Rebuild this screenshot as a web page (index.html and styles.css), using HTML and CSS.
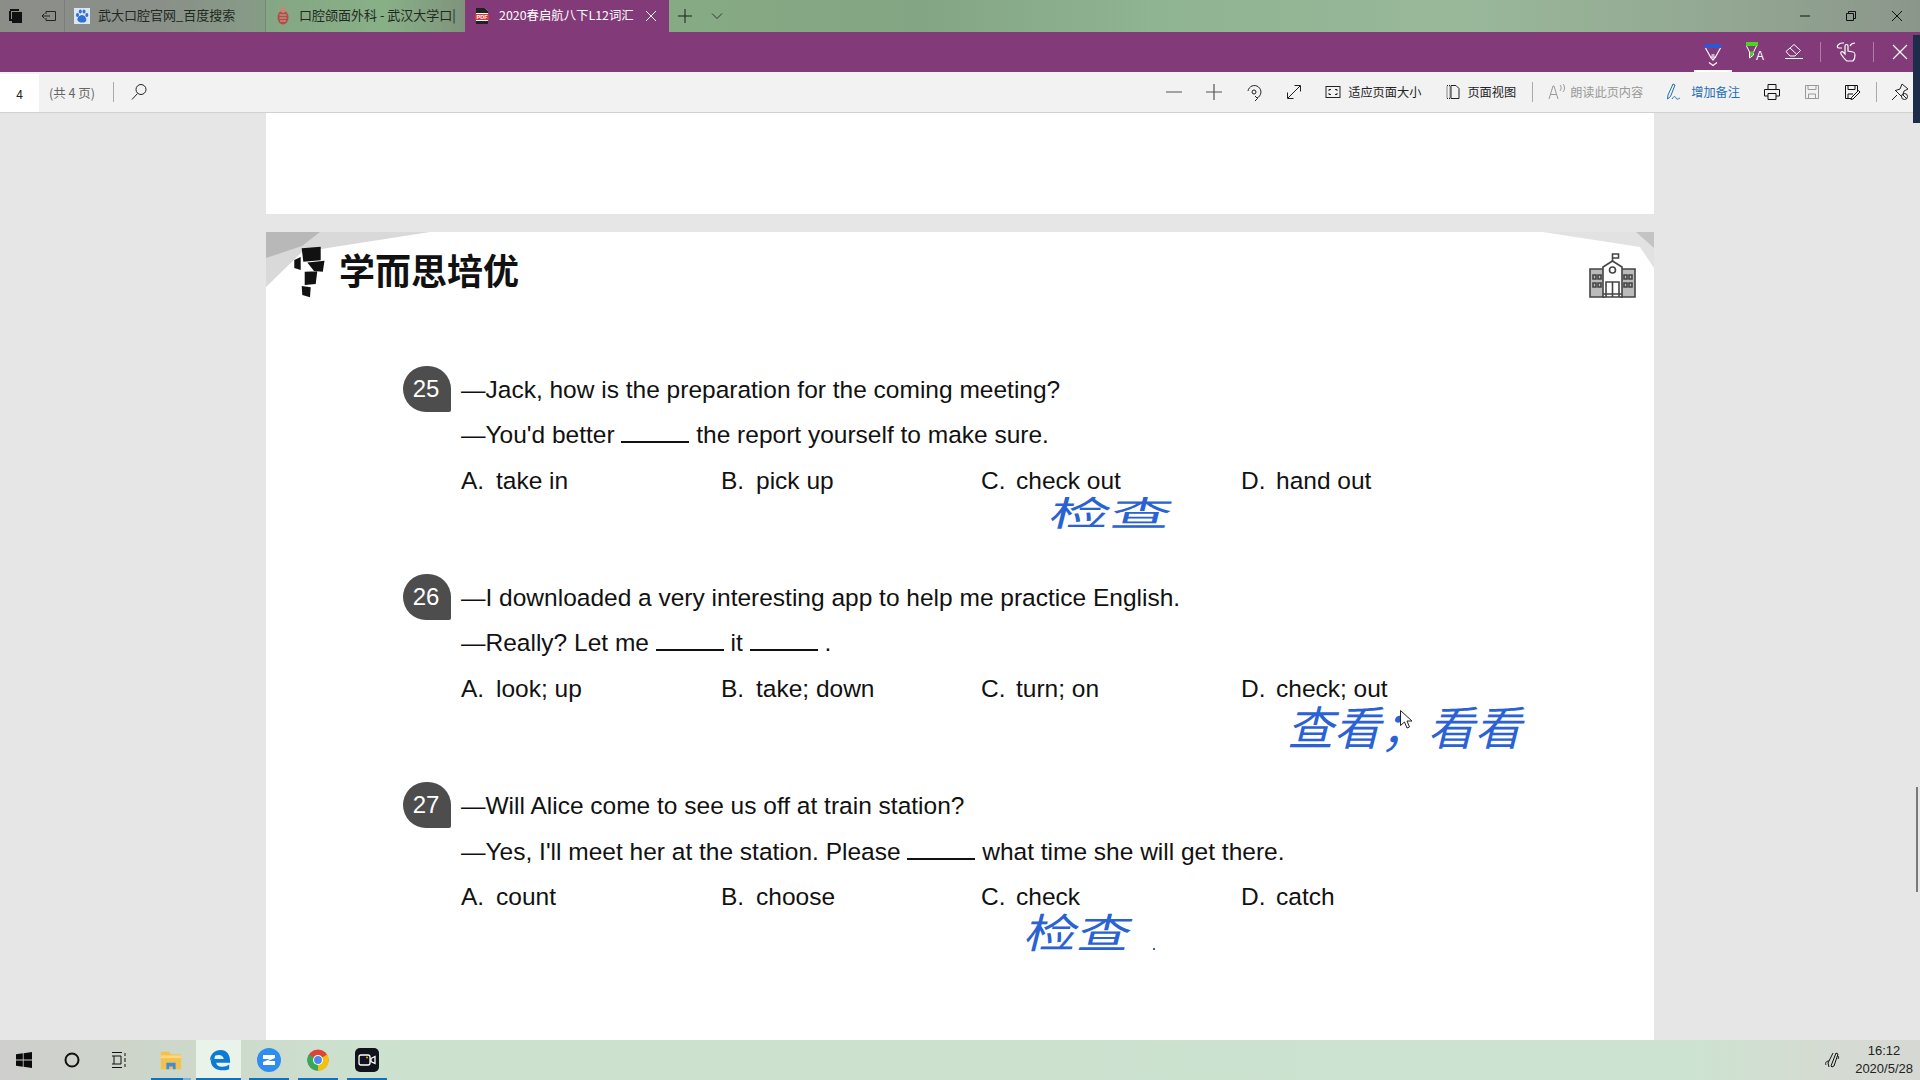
FILE: index.html
```html
<!DOCTYPE html>
<html lang="zh-CN">
<head>
<meta charset="utf-8">
<title>2020春启航八下L12词汇</title>
<link rel="stylesheet" href="styles.css">
</head>
<body>
<div class="app">
  <header class="tabbar">
    <div class="tab-tools">
      <svg class="ic16" viewBox="0 0 16 16"><path d="M2 1h9v2H2zM4 4h10v11H4z" fill="#111"/><path d="M2 3v9h2" fill="none" stroke="#111" stroke-width="2"/></svg>
      <svg class="ic16" viewBox="0 0 16 16" fill="none" stroke="#222"><path d="M5 3.500h9.500v9H5V10M5 6V3.500M1 8h8M3.500 5.500 1 8l2.500 2.500"/></svg>
    </div>
    <div class="tab">
      <svg class="ic16" viewBox="0 0 16 16"><rect width="16" height="16" fill="#dbe6f6"/><g fill="#2f6fd6"><ellipse cx="3.500" cy="7" rx="1.500" ry="2"/><ellipse cx="6.300" cy="3.500" rx="1.500" ry="2"/><ellipse cx="10" cy="3.500" rx="1.500" ry="2"/><ellipse cx="12.800" cy="7" rx="1.500" ry="2"/><path d="M8 7c3 0 5 4 4 6s-6 2-8 0 1-6 4-6z"/></g></svg>
      <span class="tab-title">武大口腔官网_百度搜索</span>
    </div>
    <div class="tab tab-second">
      <svg class="ic16" viewBox="0 0 16 18"><ellipse cx="8" cy="10.500" rx="5.500" ry="7" fill="#ad5048"/><circle cx="8" cy="3" r="2.800" fill="#c9837a"/><path d="M4.500 8h7M4.500 11h7M5 14h6" stroke="#d9a29a"/></svg>
      <span class="tab-title">口腔颌面外科 - 武汉大学口|</span>
    </div>
    <div class="tab tab-active">
      <svg class="ic16" viewBox="0 0 16 16"><path d="M2 0h9l3 3v13H2z" fill="#fff"/><path d="M2 0h9l3 3v2H2zM2 13h12v3H2z" fill="#222"/><rect x="1" y="6" width="14" height="6" fill="#d13b3b"/><text class="pdf-mark" x="8" y="11">PDF</text></svg>
      <span class="tab-title tab-title-active">2020春启航八下L12词汇</span>
      <svg class="ic12" viewBox="0 0 12 12" stroke="#fff" fill="none"><path d="M1 1l10 10M11 1 1 11"/></svg>
    </div>
    <svg class="ic16 tab-plus" viewBox="0 0 16 16" stroke="#1c1c1c" fill="none"><path d="M8 1v14M1 8h14"/></svg>
    <svg class="ic12 tab-chevron" viewBox="0 0 12 12" stroke="#333" fill="none"><path d="M1 3.500l5 5 5-5"/></svg>
    <div class="win-controls">
      <svg class="ic12" viewBox="0 0 12 12" stroke="#111" fill="none"><path d="M1 6h10"/></svg>
      <svg class="ic12" viewBox="0 0 12 12" stroke="#111" fill="none"><path d="M1.500 3.500h7v7h-7zM3.500 3.500v-2h7v7h-2"/></svg>
      <svg class="ic12" viewBox="0 0 12 12" stroke="#111" fill="none"><path d="M1 1l10 10M11 1 1 11"/></svg>
    </div>
  </header>

  <div class="inkbar">
    <div class="ink-tool ink-tool-active">
      <svg class="ic24" viewBox="0 0 24 30"><rect x="4" y="2" width="16" height="4" fill="#2b57d8"/><path d="M4.500 6l5 9h5l5-9M9.500 15l2.500 3 2.500-3" fill="none" stroke="#fff" stroke-width="1.200"/><path d="M12 12v5" stroke="#c9b5d6" stroke-width="3"/><path d="M8 20.500l4 3 4-3" fill="none" stroke="#fff" stroke-width="1.200"/></svg>
    </div>
    <div class="ink-tool">
      <svg class="ic24" viewBox="0 0 24 24"><rect x="4" y="2" width="12" height="4" fill="#49d41d"/><path d="M4.500 6l3 6v6l4-3V12l3-6" fill="none" stroke="#fff"/><path d="M8 11.500h4.500l-1.500 3-3 2.500z" fill="#49d41d"/><text class="ink-a" x="14" y="20">A</text></svg>
    </div>
    <div class="ink-tool">
      <svg class="ic24" viewBox="0 0 24 24" fill="none" stroke="#fff"><path d="M4 11.500 12 4.500l6.500 6-5.500 5.500H8zM8 8l6.500 6M3 18.500h18"/></svg>
    </div>
    <span class="ink-sep"></span>
    <div class="ink-tool">
      <svg class="ic24" viewBox="0 0 24 24" fill="none" stroke="#fff" stroke-width="1.200"><path d="M12 21c-2-1-4-4-6-7-1-2 1-3 2-2l2 2V6c0-2 3-2 3 0v5l5 1c2 .5 2 1 2 3 0 3-1 5-2 6zM7 8H4c-2 0-2-2-1-3s2-2 4-2h2M15 6c1-2 2-3 5-3"/></svg>
    </div>
    <span class="ink-sep"></span>
    <div class="ink-tool">
      <svg class="ic16b" viewBox="0 0 18 18" fill="none" stroke="#fff" stroke-width="1.200"><path d="M2 2l14 14M16 2 2 16"/></svg>
    </div>
  </div>

  <nav class="toolbar">
    <span class="page-input">4</span>
    <span class="page-count">(共 4 页)</span>
    <span class="tb-sep"></span>
    <svg class="ic18 tb-search" viewBox="0 0 18 18" fill="none" stroke="#222"><circle cx="11" cy="6.500" r="5"/><path d="M7.500 10.500 2 16.500"/></svg>
    <div class="tb-right">
      <svg class="ic18" viewBox="0 0 18 18" stroke="#777" fill="none" stroke-width="1.300"><path d="M1 9h16"/></svg>
      <svg class="ic18" viewBox="0 0 18 18" stroke="#555" fill="none" stroke-width="1.200"><path d="M1 9h16M9 1v16"/></svg>
      <svg class="ic18" viewBox="0 0 18 18" stroke="#222" fill="none"><path d="M3 8a6.500 6.500 0 1 1 9 7M10 13l2.500 2.500L10 18"/><circle cx="9" cy="9" r="2"/></svg>
      <svg class="ic18" viewBox="0 0 18 18" stroke="#222" fill="none"><path d="M3 15 15 3M9.500 2.500h6v6M2.500 9.500v6h6"/></svg>
      <div class="tb-item tb-item-fit">
        <svg class="ic16" viewBox="0 0 16 16" stroke="#222" fill="none"><rect x="1" y="2.500" width="14" height="11"/><path d="M4 7V5.500h2M12 7V5.500h-2M4 9v1.500h2M12 9v1.500h-2"/></svg>
        <span>适应页面大小</span>
      </div>
      <div class="tb-item tb-item-view">
        <svg class="ic16" viewBox="0 0 16 16" stroke="#222" fill="none"><path d="M2 1.500h3v13H2z" stroke-dasharray="1 1"/><path d="M6 1.500h5l3 3v10H6z"/></svg>
        <span>页面视图</span>
      </div>
      <span class="tb-sep tb-sep-view"></span>
      <div class="tb-item tb-item-read">
        <svg class="ic18" viewBox="0 0 18 18" stroke="#999" fill="none"><path d="M1 16 5 3h1l4 13M2.500 11.500h6M12 2c1.500 1.500 1.500 4 0 6M15 1c2 2 2 6 0 8"/></svg>
        <span>朗读此页内容</span>
      </div>
      <div class="tb-item tb-item-note">
        <svg class="ic18" viewBox="0 0 18 18" stroke="#1f6fb5" fill="none"><path d="M7 1 2 12l-.5 4 3-2.500L9 2zM6 16c2-3 3-3 4-1s2 1 4 0"/></svg>
        <span>增加备注</span>
      </div>
      <svg class="ic18 tb-print" viewBox="0 0 18 18" stroke="#111" fill="none"><path d="M5 6V1.500h8V6M5 13H1.500V6.500h15V13H13M5 10.500h8v6H5z"/></svg>
      <svg class="ic18" viewBox="0 0 18 18" stroke="#999" fill="none"><path d="M2.500 2.500h13v13h-13zM5 2.500v4h8v-4M5.500 15.500V11h7v4.500"/></svg>
      <svg class="ic18" viewBox="0 0 18 18" stroke="#111" fill="none"><path d="M8 15.500H2.500v-13h12V9M5 2.500v4h7v-4M5 15v-4h5M10 16l7-7-1.500-1.500-7 7-.5 2z"/></svg>
      <span class="tb-sep tb-sep-tight"></span>
      <svg class="ic18 tb-pin" viewBox="0 0 18 18" stroke="#222" fill="none"><path d="M1 17l5-5M4 7l7 7M4.500 7.500 9 6l2-5 6 5-4 2 -1 4"/><circle cx="13.500" cy="13.500" r="3"/><path d="M11.500 11.500l4 4"/></svg>
    </div>
  </nav>

  <main class="viewer">
    <div class="page-tail"></div>
    <article class="page">
      <svg class="corner corner-left" viewBox="0 0 164 56"><path d="M0 0h164L36 20 0 55z" fill="#d9d9d9"/><path d="M0 0h54L36 14 0 26z" fill="#b8b8b8"/></svg>
      <svg class="corner corner-right" viewBox="0 0 111 36"><path d="M0 0h111v36L97 15z" fill="#e2e2e2"/><path d="M93 0h18v16z" fill="#c4c4c4"/></svg>

      <div class="page-head">
        <div class="logo">
          <svg class="logo-mark" viewBox="0 0 31 52"><path d="M7.700 2.300 26.700.7v13.500L9.300 15.700zM.3 14l6.400-3V24L.3 22zM13.300 16.500 30.500 14.700 28.800 25.700 20 25zM10.700 25.700l12.600-.4L21.700 38 10.700 39zM7.700 40l9 1.300-.7 10L8.300 49z" fill="#111"/></svg>
          <span class="logo-text">学而思培优</span>
        </div>
        <svg class="school" viewBox="0 0 47 45" fill="#bbb" stroke="#444" stroke-width="1.600"><path d="M1 16h14v28H1zM32 16h14v28H32z"/><path d="M14 14 23.500 8 33 14v30H14z" fill="#fff"/><path d="M23.500 8V1h6v4h-6" fill="none"/><circle cx="23.500" cy="17" r="3" fill="none"/><path d="M17 44V29h13v15M23.500 29v15M14 41h19M4 22h3v4H4zM9 22h3v4H9zM4 30h3v4H4zM9 30h3v4H9zM35 22h3v4h-3zM40 22h3v4h-3zM35 30h3v4h-3zM40 30h3v4h-3z" fill="none"/></svg>
      </div>

      <section class="question">
        <span class="badge">25</span>
        <div class="q-body">
          <p class="q-line">—Jack, how is the preparation for the coming meeting?</p>
          <p class="q-line">—You'd better <span class="blank"></span> the report yourself to make sure.</p>
          <div class="options">
            <span class="option"><b class="opt-key">A.</b>take in</span>
            <span class="option"><b class="opt-key">B.</b>pick up</span>
            <span class="option"><b class="opt-key">C.</b>check out</span>
            <span class="option"><b class="opt-key">D.</b>hand out</span>
          </div>
        </div>
      </section>

      <section class="question">
        <span class="badge">26</span>
        <div class="q-body">
          <p class="q-line">—I downloaded a very interesting app to help me practice English.</p>
          <p class="q-line">—Really? Let me <span class="blank"></span> it <span class="blank"></span> .</p>
          <div class="options">
            <span class="option"><b class="opt-key">A.</b>look; up</span>
            <span class="option"><b class="opt-key">B.</b>take; down</span>
            <span class="option"><b class="opt-key">C.</b>turn; on</span>
            <span class="option"><b class="opt-key">D.</b>check; out</span>
          </div>
        </div>
      </section>

      <section class="question">
        <span class="badge">27</span>
        <div class="q-body">
          <p class="q-line">—Will Alice come to see us off at train station?</p>
          <p class="q-line">—Yes, I'll meet her at the station. Please <span class="blank"></span> what time she will get there.</p>
          <div class="options">
            <span class="option"><b class="opt-key">A.</b>count</span>
            <span class="option"><b class="opt-key">B.</b>choose</span>
            <span class="option"><b class="opt-key">C.</b>check</span>
            <span class="option"><b class="opt-key">D.</b>catch</span>
          </div>
        </div>
      </section>

      <span class="ink ink-1">检查</span>
      <span class="ink ink-2">查看；看看</span>
      <span class="ink ink-3">检查</span>
      <span class="ink-dot"></span>
      <svg class="cursor" viewBox="0 0 12 20"><path d="M.5.500v15l4-3.500 2.500 6 2.500-1-2.500-6h5z" fill="#fff" stroke="#222"/></svg>
    </article>
    <div class="scroll-thumb"></div>
  </main>

  <div class="scrollbar-edge"></div>

  <footer class="taskbar">
    <div class="task-slot">
      <svg class="ic16" viewBox="0 0 16 16" fill="#0a0a0a"><path d="M0 2.300 6.800 1.300v6.300H0zM7.600 1.200 16 0v7.600H7.600zM0 8.400h6.800v6.300L0 13.700zM7.600 8.400H16V16l-8.400-1.200z"/></svg>
    </div>
    <div class="task-slot">
      <svg class="ic16" viewBox="0 0 16 16" fill="none" stroke="#111" stroke-width="2"><circle cx="8" cy="8" r="6.500"/></svg>
    </div>
    <div class="task-slot">
      <svg class="ic16" viewBox="0 0 16 16" fill="none" stroke="#111"><path d="M0 .500h10M0 15.500h10M2 4h7v8H2zM0 4h2M0 12h2M13 1v3M13 6v4M13 12v3"/></svg>
    </div>
    <div class="task-app task-explorer">
      <svg class="ic-app" viewBox="0 0 24 24"><path d="M1 3h9l2 3h11v16H1z" fill="#f4c04f"/><path d="M1 7h22v3H1z" fill="#fbd978"/><path d="M7 22v-7h10v7h-3v-3h-4v3z" fill="#3c8ed8"/></svg>
    </div>
    <div class="task-app task-edge">
      <svg class="ic-app" viewBox="0 0 24 24"><path d="M1 13C1 6 6 1 13 1c6 0 10 5 10 12v2H8c0 5 9 6 14 2v5c-8 3-19 1-20-8 0-2 .5-3 1-4 1-2 3-4 5-4-1 1-2 2-2 5h10c0-5-8-6-12-2-1 1-2 2-3 4z" fill="#0c7bd4"/></svg>
    </div>
    <div class="task-app">
      <svg class="ic24" viewBox="0 0 24 24"><circle cx="12" cy="12" r="12" fill="#2f8df0"/><path d="M6 7h12v3l-7 3h7v4H6v-3l7-3H6z" fill="#fff"/></svg>
    </div>
    <div class="task-app">
      <svg class="ic-app" viewBox="0 0 24 24"><circle cx="12" cy="12" r="11.500" fill="#db4437"/><path d="M12 12 22 6a11.500 11.500 0 0 1-10 17.500z" fill="#f4c20d"/><path d="M12 12 12 23.500A11.500 11.500 0 0 1 2 6z" fill="#3aa757"/><circle cx="12" cy="12" r="5.500" fill="#fff"/><circle cx="12" cy="12" r="4.300" fill="#4a8af0"/></svg>
    </div>
    <div class="task-app">
      <svg class="ic24" viewBox="0 0 24 24"><rect width="24" height="24" rx="5" fill="#10131c"/><rect x="4" y="7" width="11" height="10" rx="2" fill="none" stroke="#fff" stroke-width="1.300"/><path d="M16 10.500l4-2v7l-4-2z" fill="none" stroke="#fff" stroke-width="1.300"/><circle cx="12" cy="9.500" r="1" fill="#f5b300"/></svg>
    </div>
    <div class="tray">
      <svg class="ic18" viewBox="0 0 18 18" fill="none" stroke="#111"><path d="M8 15 13 2l2 1-4 12-2 1zM10 2l-5 10 1 4M14 5c2 0 2 1 1 3M6 10c-3 0-4 2-3 4"/></svg>
      <div class="clock"><span>16:12</span><span>2020/5/28</span></div>
    </div>
  </footer>
</div>
</body>
</html>
```

FILE: styles.css
```css
* { box-sizing: border-box; }
html, body { margin: 0; padding: 0; height: 100%; overflow: hidden; }
body { font-family: "Liberation Sans", "Noto Sans CJK SC", sans-serif; color: #111; }
svg { display: block; flex: none; }
p { margin: 0; }

.app { width: 1920px; height: 1080px; display: flex; flex-direction: column; position: relative; }

.ic12 { width: 12px; height: 12px; }
.ic16 { width: 16px; height: 16px; }
.ic16b { width: 18px; height: 18px; }
.ic18 { width: 18px; height: 18px; }
.ic24 { width: 24px; height: 24px; }
.ic-app { width: 22px; height: 22px; }

/* tab strip */
.tabbar {
  height: 32px; flex: none; display: flex; align-items: center;
  background: linear-gradient(90deg, #8b8d89 0, #8a8f89 8%, #83a584 18%, #87ad84 30%, #84a583 48%, #8fb491 60%, #99b89a 76%, #93a792 90%, #8b968b 100%);
}
.tab-tools { width: 65px; height: 100%; display: flex; align-items: center; gap: 17px; padding-left: 8px; border-right: 1px solid #77807a; }
.tab { width: 201px; height: 100%; display: flex; align-items: center; gap: 8px; padding-left: 9px; font-size: 13px; color: #1e2a1e; border-right: 1px solid #728a72; }
.tab-second { width: 199px; background: linear-gradient(90deg, #85a684, #88b087 60%, #7f937d); border-right: 0; padding-left: 9px; }
.tab-second .ic16 { height: 18px; }
.tab-active { width: 204px; background: #823b78; color: #fff; border-right: 0; gap: 9px; }
.tab-title { font-family: "Noto Sans CJK SC", sans-serif; white-space: nowrap; overflow: hidden; width: 140px; line-height: 18px; margin-bottom: 3px; }
.tab-second .tab-title { width: 160px; }
.tab-title-active { width: 137px; font-size: 12.400px; overflow: visible; }
.pdf-mark { font: 700 5.500px "Liberation Sans", sans-serif; fill: #fff; text-anchor: middle; }
.tab-plus { margin-left: 8px; }
.tab-chevron { margin-left: 18px; }
.win-controls { margin-left: auto; display: flex; gap: 34px; padding-right: 17px; }

/* ink bar */
.inkbar { height: 40px; flex: none; background: #823b78; display: flex; align-items: center; justify-content: flex-end; }
.ink-tool { width: 40px; height: 40px; display: flex; align-items: center; justify-content: center; }
.ink-tool-active { width: 38px; margin-right: 2px; height: 40px; border-bottom: 2px solid #fff; align-items: flex-start; padding-top: 10px; }
.ink-tool-active .ic24 { height: 30px; }
.ink-a { font: 12px "Liberation Sans", sans-serif; fill: #fff; }
.ink-sep { width: 1px; height: 20px; background: #b47aaa; margin: 0 6px; }

/* toolbar */
.toolbar { height: 41px; flex: none; background: #f2f2f2; border-bottom: 1px solid #d0d0d0; display: flex; align-items: center; font-family: "Noto Sans CJK SC", sans-serif; font-size: 12px; }
.page-input { width: 39px; height: 38px; margin-top: 2px; background: #fff; display: flex; align-items: center; justify-content: center; font-size: 12px; color: #222; }
.page-count { margin-left: 10px; color: #666; width: 64px; font-size: 12.500px; }
.tb-sep { width: 1px; height: 20px; background: #aaa; flex: none; }
.tb-sep-view { margin-left: -6px; }
.tb-sep-tight { margin-left: -7px; }
.tb-pin { margin-left: -8px; }
.tb-search { margin-left: 16px; }
.tb-right { margin-left: auto; display: flex; align-items: center; gap: 22px; padding-right: 11px; }
.tb-item { display: flex; align-items: center; gap: 7px; color: #222; white-space: nowrap; font-size: 12.200px; }
.tb-item-fit { margin-left: 0; }
.tb-item-view { margin-left: 2px; gap: 6px; }
.tb-item-read { color: #999; margin-left: -7px; gap: 4px; }
.tb-item-note { color: #1f6fb5; margin-left: 1px; gap: 7px; }
.tb-print { margin-left: 1px; }

/* viewer */
.viewer { flex: 1; min-height: 0; background: #e6e6e6; padding-left: 266px; overflow: hidden; position: relative; }
.page-tail { width: 1388px; height: 101px; background: #fff; }
.page { width: 1388px; height: 900px; margin-top: 18px; background: #fff; position: relative; padding-left: 137px; }
.corner { position: absolute; top: 0; }
.corner-left { left: 0; width: 164px; height: 56px; }
.corner-right { right: 0; width: 111px; height: 36px; }
.page-head { position: relative; height: 135px; margin-left: -137px; padding: 14px 18px 0 28px; display: flex; justify-content: space-between; align-items: flex-start; }
.logo { display: flex; align-items: flex-start; gap: 14px; }
.logo-mark { width: 31px; height: 52px; }
.logo-text { font-family: "Noto Sans CJK SC", sans-serif; font-weight: 700; font-size: 36px; line-height: 42px; margin-top: 2px; color: #111; }
.school { width: 47px; height: 45px; margin-top: 7px; }

.question { display: flex; gap: 10px; margin-bottom: 72.300px; }
.badge { width: 48px; height: 46px; flex: none; background: #4d4d4d; color: #fff; font-size: 24px; display: flex; align-items: center; justify-content: center; border-radius: 24px 24px 2px 24px; margin-top: -1px; padding-right: 2px; }
.q-body { flex: 1; font-size: 24.500px; }
.q-line { height: 45.300px; line-height: 45.300px; color: #111; white-space: nowrap; }
.blank { display: inline-block; width: 68px; height: 2px; background: #111; vertical-align: baseline; }
.options { display: grid; grid-template-columns: repeat(4, 260px); height: 45.300px; line-height: 45.300px; }
.option { white-space: nowrap; }
.opt-key { display: inline-block; width: 35px; font-weight: 400; }

.ink { position: absolute; font-family: "Noto Sans CJK SC", sans-serif; color: #2a62d4; white-space: nowrap; line-height: 1; font-size: 48px; transform-origin: left top; }
.ink-1 { left: 789px; top: 262px; transform: skewX(-14deg) scale(1.270, .720); }
.ink-2 { left: 1028px; top: 470px; font-size: 46px; transform-origin: center; transform: skewX(-14deg) scaleX(1.020); }
.ink-3 { left: 766px; top: 678px; transform: skewX(-14deg) scale(1.100, .850); }
.ink-dot { position: absolute; left: 887px; top: 716px; width: 2px; height: 2px; background: #2a62d4; }
.cursor { position: absolute; left: 1134px; top: 478px; width: 12px; height: 20px; }

.scrollbar-edge { position: absolute; right: 0; top: 35px; width: 7px; height: 88px; background: #1d2d49; }
.scroll-thumb { position: absolute; right: 2px; top: 674px; width: 2px; height: 105px; background: #7a7a7a; }

/* taskbar */
.taskbar { height: 40px; flex: none; display: flex; align-items: center; background: linear-gradient(90deg, #cfcfcd 0, #cdd6ca 8%, #cce2cf 20%, #cde3d1 88%, #d4dcd2 94%, #d6d8d3 100%); }
.task-slot { width: 48px; height: 100%; display: flex; align-items: center; justify-content: center; }
.task-app { width: 40px; height: 100%; margin-right: 9px; display: flex; align-items: center; justify-content: center; position: relative; }
.task-app::after { content: ""; position: absolute; left: 0; right: 0; bottom: 0; height: 2px; background: #0d72c0; }
.task-explorer { margin-left: 7px; margin-right: 5px; }
.task-explorer::after { background: linear-gradient(90deg, #0d72c0 80%, #7fb3d6 80%); }
.task-edge { width: 45px; margin-right: 8px; padding-left: 3px; background: #e9f3ea; }
.tray { margin-left: auto; display: flex; align-items: center; gap: 14px; padding-right: 7px; }
.clock { display: flex; flex-direction: column; align-items: center; font-family: "Liberation Sans", sans-serif; font-size: 13px; line-height: 18px; color: #222; }
```
